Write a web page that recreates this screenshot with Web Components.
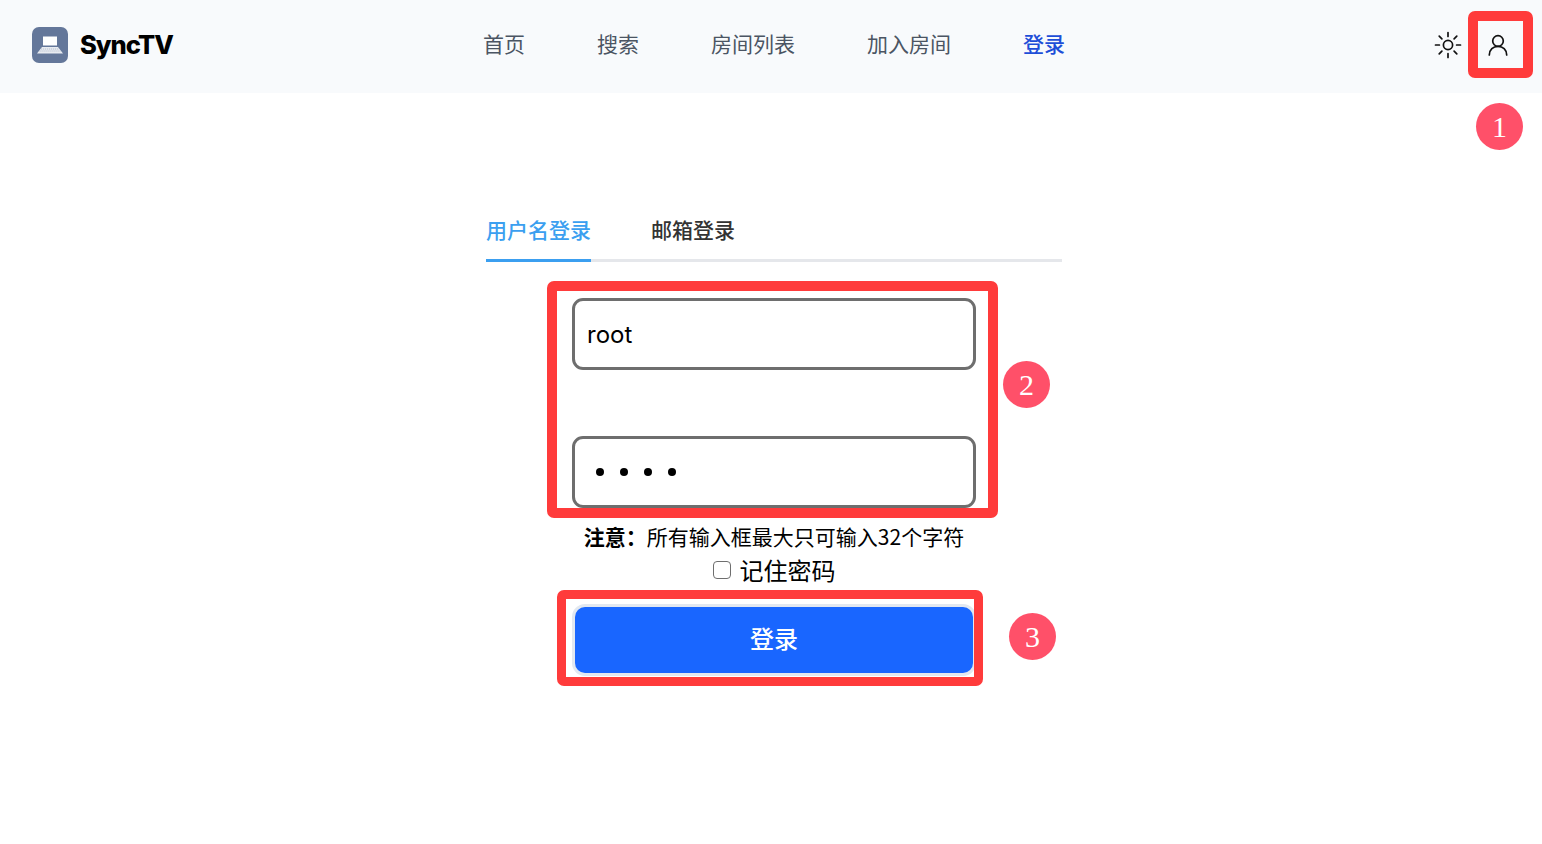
<!DOCTYPE html>
<html lang="zh">
<head>
<meta charset="utf-8">
<title>SyncTV</title>
<style>
  html, body { margin: 0; height: 100%; background: #fff; }
  body { font-family: Inter, "Noto Sans CJK SC", sans-serif; overflow: hidden; }
</style>
</head>
<body>
<app-header></app-header>
<login-form></login-form>
<mark-frame style="left:1468px;top:11px;width:65px;height:67px;border-width:10.500px"></mark-frame>
<mark-frame style="left:547px;top:281px;width:451px;height:237px"></mark-frame>
<mark-frame style="left:557px;top:590px;width:426px;height:96px;border-width:9px"></mark-frame>
<step-badge style="left:1476px;top:103px">1</step-badge>
<step-badge style="left:1003px;top:361px">2</step-badge>
<step-badge style="left:1009px;top:613px">3</step-badge>

<script>
  class AppHeader extends HTMLElement {
    constructor() {
      super();
      this.attachShadow({ mode: "open" });
      this.shadowRoot.innerHTML = `
        <style>
          :host { display: flex; align-items: center; box-sizing: border-box; height: 93px; padding-bottom: 3px; background: #f8fafc; position: relative; }
          .logo { display: flex; align-items: center; gap: 12px; margin-left: 32px; }
          .logo svg { display: block; }
          .logo b { font: 800 25.500px/36px Inter, "Noto Sans CJK SC", sans-serif; color: #000; letter-spacing: -1px; }
          nav { position: absolute; left: 483px; top: 0; height: 85px; display: flex; align-items: center; gap: 72px; }
          nav a { font: 400 21px/28px "Noto Sans CJK SC", sans-serif; color: #4b5563; text-decoration: none; white-space: nowrap; }
          nav a.active { color: #1d4ed8; font-weight: 500; }
          .tools { margin-left: auto; display: flex; align-items: center; gap: 22px; margin-right: 30px; }
          .tools svg { display: block; }
        </style>
        <div class="logo">
          <svg width="36" height="36" viewBox="0 0 36 36">
            <rect width="36" height="36" rx="7" fill="#64779a"/>
            <rect x="11" y="9.500" width="14" height="9" fill="#fff"/>
            <path d="M10 20h16l5 6.500H5z" fill="#e8ebf1"/>
            <path d="M9 22h18M7.500 24h21" stroke="#a9b4c7" stroke-width=".8" stroke-dasharray="1.2 .8"/>
          </svg>
          <b>SyncTV</b>
        </div>
        <nav>
          <a href="#">首页</a>
          <a href="#">搜索</a>
          <a href="#">房间列表</a>
          <a href="#">加入房间</a>
          <a href="#" class="active">登录</a>
        </nav>
        <div class="tools">
          <svg width="28" height="28" viewBox="0 0 28 28" fill="none" stroke="#111" stroke-width="1.7" stroke-linecap="round">
            <circle cx="14" cy="14" r="4.600"/>
            <path d="M14 1.500v3.900M14 22.600v3.900M1.500 14h3.900M22.600 14h3.900M5.200 5.200l2.700 2.700M20.100 20.100l2.700 2.700M5.200 22.800l2.700-2.700M20.100 7.900l2.700-2.700"/>
          </svg>
          <svg width="28" height="28" viewBox="0 0 28 28" fill="none" stroke="#111" stroke-width="1.7" stroke-linecap="round">
            <circle cx="14" cy="10" r="5.300"/>
            <path d="M5.300 24c0-5.500 3.900-8.700 8.700-8.700s8.700 3.200 8.700 8.700"/>
          </svg>
        </div>
      `;
    }
  }

  class LoginTabs extends HTMLElement {
    constructor() {
      super();
      this.attachShadow({ mode: "open" });
      this.shadowRoot.innerHTML = `
        <style>
          :host { display: flex; gap: 60px; width: 576px; height: 64px; box-sizing: border-box; border-bottom: 3px solid #e5e7eb; }
          span { font: 500 21px/30px "Noto Sans CJK SC", sans-serif; color: #333; padding-top: 16px; height: 61px; box-sizing: border-box; white-space: nowrap; }
          span.active { color: #3b9ff0; border-bottom: 3px solid #3b9ff0; height: 64px; }
        </style>
        <span class="active">用户名登录</span>
        <span>邮箱登录</span>
      `;
    }
  }

  class TextField extends HTMLElement {
    constructor() {
      super();
      this.attachShadow({ mode: "open" });
      this.shadowRoot.innerHTML = `
        <style>
          :host { display: flex; align-items: center; box-sizing: border-box; width: 404px; height: 72px; padding: 2px 12px 0; border: 3px solid #6e6e6e; border-radius: 11px; background: #fff; font: 24px/30px Inter, "Noto Sans CJK SC", sans-serif; color: #000; }
        </style>
        <slot></slot>
      `;
    }
  }

  class LoginForm extends HTMLElement {
    constructor() {
      super();
      this.attachShadow({ mode: "open" });
      this.shadowRoot.innerHTML = `
        <style>
          :host { display: flex; flex-direction: column; align-items: center; width: 576px; margin-left: 486px; padding-top: 105px; }
          .fields { display: flex; flex-direction: column; gap: 66px; margin-top: 36px; }
          .dots { display: flex; gap: 16px; padding-left: 9px; margin-top: -2px; }
          .dots i { width: 8px; height: 8px; border-radius: 50%; background: #000; }
          .note { font: 21px/30px "Noto Sans CJK SC", sans-serif; color: #000; margin-top: 13px; white-space: nowrap; }
          .note b { font-weight: 700; }
          .remember { display: flex; align-items: center; gap: 9px; font: 24px/36px "Noto Sans CJK SC", sans-serif; color: #000; margin-top: 1px; }
          .box { width: 18px; height: 18px; box-sizing: border-box; border: 1.500px solid #6e6e6e; border-radius: 4px; background: #fff; }
          .submit { width: 398px; height: 66px; box-sizing: border-box; padding-bottom: 5px; margin-top: 19px; border-radius: 10px; background: #1966ff; color: #fff; display: flex; align-items: center; justify-content: center; font: 500 24px/30px "Noto Sans CJK SC", sans-serif; box-shadow: 0 0 0 3px #e2e8f0; }
        </style>
        <login-tabs></login-tabs>
        <div class="fields">
          <text-field>root</text-field>
          <text-field><div class="dots"><i></i><i></i><i></i><i></i></div></text-field>
        </div>
        <div class="note"><b>注意：</b>所有输入框最大只可输入32个字符</div>
        <div class="remember"><span class="box"></span><span>记住密码</span></div>
        <div class="submit">登录</div>
      `;
    }
  }

  class MarkFrame extends HTMLElement {
    constructor() {
      super();
      this.attachShadow({ mode: "open" });
      this.shadowRoot.innerHTML = `
        <style>
          :host { display: block; position: absolute; box-sizing: border-box; border: 10px solid #ff3b3b; border-radius: 7px; pointer-events: none; }
        </style>
      `;
    }
  }

  class StepBadge extends HTMLElement {
    constructor() {
      super();
      this.attachShadow({ mode: "open" });
      this.shadowRoot.innerHTML = `
        <style>
          :host { display: flex; position: absolute; width: 47px; height: 47px; border-radius: 50%; background: #ff5069; color: #fff; align-items: center; justify-content: center; font: 30px/47px "Liberation Serif", serif; }
        </style>
        <slot></slot>
      `;
    }
  }

  customElements.define("app-header", AppHeader);
  customElements.define("login-tabs", LoginTabs);
  customElements.define("text-field", TextField);
  customElements.define("login-form", LoginForm);
  customElements.define("mark-frame", MarkFrame);
  customElements.define("step-badge", StepBadge);
</script>
</body>
</html>
